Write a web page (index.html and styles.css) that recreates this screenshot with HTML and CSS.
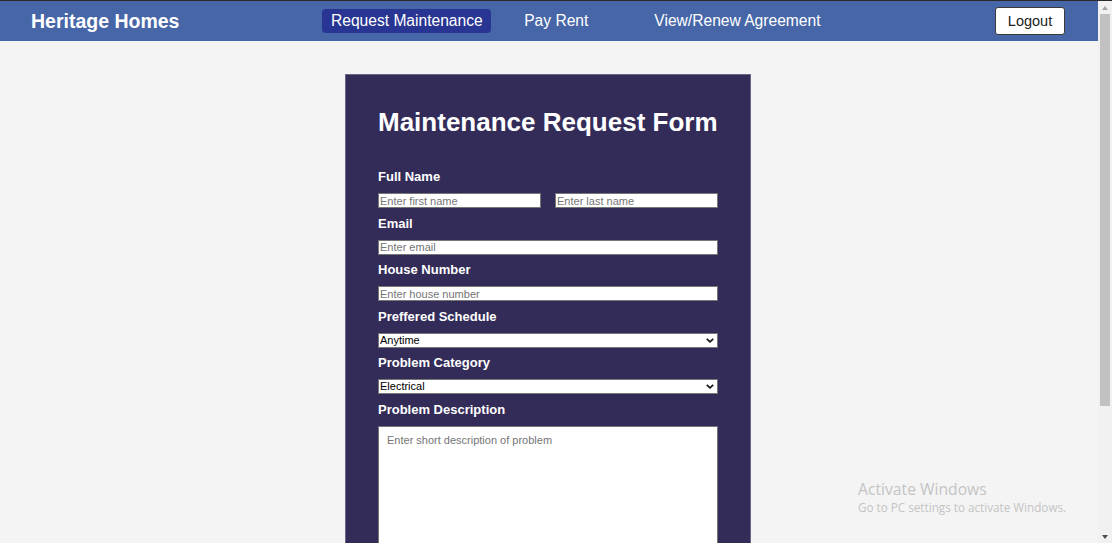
FILE: index.html
```html
<!DOCTYPE html>
<html lang="en">
<head>
<meta charset="utf-8">
<title>Heritage Homes - Maintenance Request</title>
<link rel="stylesheet" href="styles.css">
</head>
<body>
<div class="topline"></div>
<div class="window">
  <div class="page">
    <header class="navbar">
      <div class="brand">Heritage Homes</div>
      <nav class="nav">
        <a class="nav-link active" href="#">Request Maintenance</a>
        <a class="nav-link pay" href="#">Pay Rent</a>
        <a class="nav-link view" href="#">View/Renew Agreement</a>
      </nav>
      <button class="logout" type="button">Logout</button>
    </header>
    <main class="main">
      <form class="card">
        <h1 class="title">Maintenance Request Form</h1>
        <div class="field">
          <label class="label">Full Name</label>
          <div class="name-row">
            <input class="input" type="text" placeholder="Enter first name">
            <input class="input" type="text" placeholder="Enter last name">
          </div>
        </div>
        <div class="field">
          <label class="label">Email</label>
          <input class="input" type="email" placeholder="Enter email">
        </div>
        <div class="field">
          <label class="label">House Number</label>
          <input class="input" type="text" placeholder="Enter house number">
        </div>
        <div class="field">
          <label class="label">Preffered Schedule</label>
          <div class="select-wrap">
            <select class="select"><option>Anytime</option><option>Morning</option><option>Afternoon</option></select>
            <svg class="chevron" width="8" height="5" viewBox="0 0 8 5" aria-hidden="true"><path d="M0.8 0.8 L4 3.8 L7.2 0.8" fill="none" stroke="#1a1a1a" stroke-width="1.8"/></svg>
          </div>
        </div>
        <div class="field">
          <label class="label">Problem Category</label>
          <div class="select-wrap">
            <select class="select"><option>Electrical</option><option>Plumbing</option><option>Other</option></select>
            <svg class="chevron" width="8" height="5" viewBox="0 0 8 5" aria-hidden="true"><path d="M0.8 0.8 L4 3.8 L7.2 0.8" fill="none" stroke="#1a1a1a" stroke-width="1.8"/></svg>
          </div>
        </div>
        <div class="field">
          <label class="label">Problem Description</label>
          <textarea class="textarea" placeholder="Enter short description of problem"></textarea>
        </div>
      </form>
    </main>
    <div class="watermark">
      <div class="wm-title">Activate Windows</div>
      <div class="wm-sub">Go to PC settings to activate Windows.</div>
    </div>
  </div>
  <div class="scrollbar">
    <div class="sb-btn"><span class="tri-up"></span></div>
    <div class="thumb"></div>
    <div class="sb-space"></div>
    <div class="sb-btn"><span class="tri-down"></span></div>
  </div>
</div>
</body>
</html>
```
FILE: styles.css
```css
html, body {
  margin: 0;
  padding: 0;
  height: 100%;
  overflow: hidden;
}
body {
  font-family: "Liberation Sans", Arial, sans-serif;
  background: #f4f4f4;
}
.topline {
  height: 1px;
  background: #2a2a2a;
}
.window {
  display: flex;
  height: 542px;
  overflow: hidden;
}
.page {
  flex: 1;
  position: relative;
  overflow: hidden;
  background: #f4f4f4;
}
.navbar {
  height: 40px;
  background: #4766a8;
  display: flex;
  align-items: center;
  padding: 0 33px 0 31px;
}
.brand {
  color: #fff;
  font-weight: bold;
  font-size: 19.5px;
  white-space: nowrap;
}
.nav {
  display: flex;
  align-items: center;
  margin-left: 143px;
}
.nav-link {
  color: #fff;
  text-decoration: none;
  font-size: 15.6px;
  line-height: 18px;
  padding: 3px 8.5px 2.5px;
  border-radius: 4px;
  white-space: nowrap;
}
.nav-link.active {
  background: #283593;
}
.nav-link.pay {
  margin-left: 24.5px;
}
.nav-link.view {
  margin-left: 49px;
}
.logout {
  margin-left: auto;
  width: 70px;
  height: 28px;
  background: #fff;
  border: 1px solid #3a3a3a;
  border-radius: 3px;
  font-family: "Liberation Sans", Arial, sans-serif;
  font-size: 14.5px;
  color: #222;
  padding: 0;
}
.main {
  display: flex;
  justify-content: center;
  padding-top: 33px;
  padding-right: 2px;
}
.card {
  width: 340px;
  padding: 32px 32px 40px;
  background: #332c58;
  border: 1px solid #6a6688;
  margin: 0;
}
.title {
  margin: 0 0 32px;
  color: #fff;
  font-size: 26px;
  line-height: 30px;
  font-weight: bold;
  white-space: nowrap;
}
.field {
  margin-bottom: 7.5px;
}
.label {
  display: block;
  color: #fff;
  font-size: 13px;
  font-weight: bold;
  line-height: 15px;
  margin-bottom: 9px;
}
.name-row {
  display: grid;
  grid-template-columns: 1fr 1fr;
  column-gap: 14px;
}
.input, .select, .textarea {
  display: block;
  width: 100%;
  box-sizing: border-box;
  font-family: "Liberation Sans", Arial, sans-serif;
  font-size: 11px;
  color: #000;
  background: #fff;
  border: 1px solid #767676;
  margin: 0;
  outline: none;
}
.input {
  height: 15px;
  padding: 0 1px;
  border-radius: 0;
}
.select-wrap {
  position: relative;
}
.select {
  -webkit-appearance: none;
  appearance: none;
  height: 15px;
  padding: 0 0 0 1px;
  border-radius: 0;
  line-height: 13px;
}
.chevron {
  position: absolute;
  right: 4px;
  top: 5px;
  pointer-events: none;
}
.textarea {
  height: 160px;
  padding: 7px 8px;
  resize: none;
  border-radius: 0;
}
.input::placeholder, .textarea::placeholder {
  color: #757575;
}
.watermark {
  position: absolute;
  left: 858px;
  top: 478px;
  color: #c4c4c4;
  font-family: "Open Sans", "Noto Sans", sans-serif;
  pointer-events: none;
}
.wm-title {
  font-size: 15.7px;
  line-height: 20px;
}
.wm-sub {
  font-size: 11.7px;
  line-height: 16px;
}
.scrollbar {
  width: 14px;
  background: #f1f1f1;
  display: flex;
  flex-direction: column;
  align-items: center;
}
.sb-btn {
  height: 13px;
  width: 14px;
  display: flex;
  align-items: center;
  justify-content: center;
}
.tri-up {
  width: 0;
  height: 0;
  border-left: 3.5px solid transparent;
  border-right: 3.5px solid transparent;
  border-bottom: 4px solid #a3a3a3;
}
.tri-down {
  width: 0;
  height: 0;
  border-left: 3.5px solid transparent;
  border-right: 3.5px solid transparent;
  border-top: 4px solid #505050;
}
.thumb {
  width: 10px;
  height: 392px;
  background: #c1c1c1;
}
.sb-space {
  flex: 1;
}
```
